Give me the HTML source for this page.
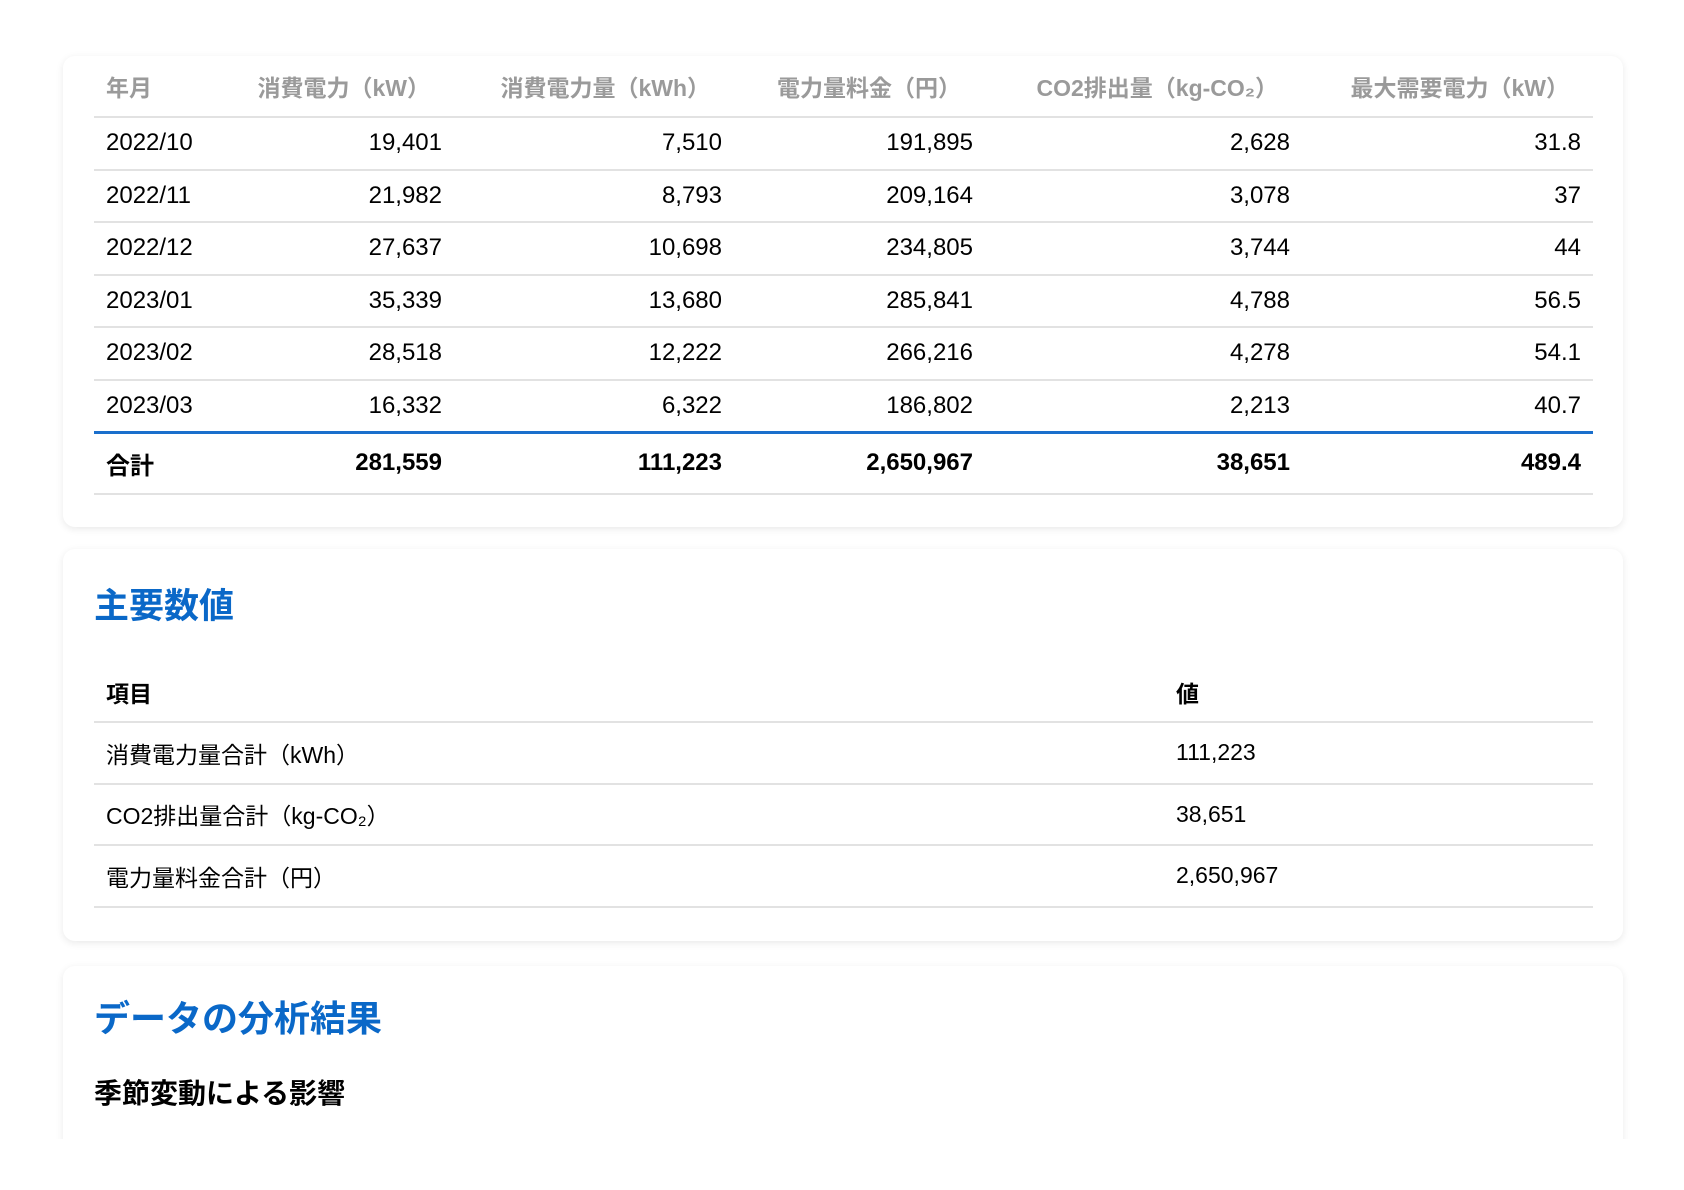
<!DOCTYPE html>
<html><head><meta charset="utf-8"><style>
*{box-sizing:border-box;margin:0;padding:0}
html,body{width:1684px;height:1190px;background:#fff;overflow:hidden}
body{font-family:"Liberation Sans","Noto Sans CJK JP",sans-serif;color:#000}
.wrap{position:absolute;left:0;top:0;width:1684px;height:1139px;overflow:hidden}
.card{position:absolute;left:63px;width:1560px;background:#fff;border-radius:12px;box-shadow:0 2px 8px rgba(0,0,0,.09);padding:0 31px}
table{border-collapse:collapse;table-layout:fixed;width:1499px}
.t1 th{height:61px;color:#9a9a9a;font-size:23px;font-weight:bold;text-align:right;padding:0 24px 0 12px;border-bottom:2px solid #e2e2e2;white-space:nowrap}
.t1 th:first-child,.t1 td:first-child{text-align:left;padding-left:12px}
.t1 td{height:52.5px;font-size:24px;text-align:right;padding:0 12px;border-bottom:2px solid #e2e2e2}
.t1 tr.tot td{height:62px;font-weight:bold;border-top:3px solid #1a6fcc;border-bottom:2px solid #e2e2e2}
h2{color:#0a68c8;font-weight:bold}
.t2 th{height:61px;font-size:23px;font-weight:bold;text-align:left;padding:0 12px;border-bottom:2px solid #e2e2e2;vertical-align:bottom;padding-bottom:12px}
.t2 td{height:61.5px;font-size:23px;text-align:left;padding:0 12px;border-bottom:2px solid #e2e2e2}
</style></head><body><div class="wrap">
<div class="card" style="top:56px;height:471px">
<table class="t1">
<colgroup><col style="width:124px"><col style="width:236px"><col style="width:280px"><col style="width:251px"><col style="width:317px"><col style="width:291px"></colgroup>
<tr><th>年月</th><th>消費電力（kW）</th><th>消費電力量（kWh）</th><th>電力量料金（円）</th><th>CO2排出量（kg-CO₂）</th><th>最大需要電力（kW）</th></tr>
<tr><td>2022/10</td><td>19,401</td><td>7,510</td><td>191,895</td><td>2,628</td><td>31.8</td></tr>
<tr><td>2022/11</td><td>21,982</td><td>8,793</td><td>209,164</td><td>3,078</td><td>37</td></tr>
<tr><td>2022/12</td><td>27,637</td><td>10,698</td><td>234,805</td><td>3,744</td><td>44</td></tr>
<tr><td>2023/01</td><td>35,339</td><td>13,680</td><td>285,841</td><td>4,788</td><td>56.5</td></tr>
<tr><td>2023/02</td><td>28,518</td><td>12,222</td><td>266,216</td><td>4,278</td><td>54.1</td></tr>
<tr><td>2023/03</td><td>16,332</td><td>6,322</td><td>186,802</td><td>2,213</td><td>40.7</td></tr>
<tr class="tot"><td>合計</td><td>281,559</td><td>111,223</td><td>2,650,967</td><td>38,651</td><td>489.4</td></tr>
</table>
</div>
<div class="card" style="top:549px;height:392px">
<h2 style="font-size:35px;position:absolute;left:31px;top:29px">主要数値</h2>
<table class="t2" style="position:absolute;left:31px;top:112px">
<colgroup><col style="width:1070px"><col style="width:429px"></colgroup>
<tr><th>項目</th><th>値</th></tr>
<tr><td>消費電力量合計（kWh）</td><td>111,223</td></tr>
<tr><td>CO2排出量合計（kg-CO₂）</td><td>38,651</td></tr>
<tr><td>電力量料金合計（円）</td><td>2,650,967</td></tr>
</table>
</div>
<div class="card" style="top:966px;height:200px">
<h2 style="font-size:36px;position:absolute;left:31px;top:24px">データの分析結果</h2>
<div style="position:absolute;left:31px;top:106px;font-size:28px;font-weight:bold">季節変動による影響</div>
</div>
</div></body></html>
